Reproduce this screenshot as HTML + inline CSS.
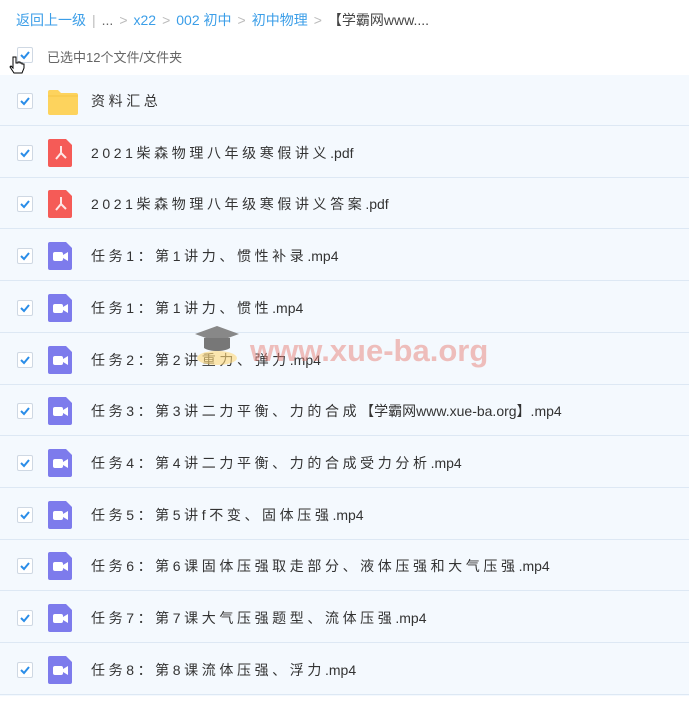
<!DOCTYPE html>
<html><head><meta charset="utf-8"><style>
body{margin:0;width:689px;height:703px;background:#fff;font-family:"Liberation Sans","Noto Sans CJK SC",sans-serif;position:relative;overflow:hidden}
.bc{position:absolute;left:16px;top:10px;font-size:14px;color:#3b9ee8;white-space:nowrap}
.bc .g{color:#bbb;margin:0 6px}
.bc .k{color:#444}
.sel{position:absolute;left:47px;top:47px;font-size:13px;color:#666}
.cb{position:absolute;width:14px;height:14px;border:1px solid #cfd8e3;border-radius:2px;background:#fff}
.cb svg{position:absolute;left:1px;top:1px}
.bg{position:absolute;left:0;top:75px;width:689px;height:621px;background:#f4f9fe}
.row{position:absolute;left:0;width:689px;height:50px;background:#f4f9fe;border-bottom:1px solid #dde8f4}
.row .cb{left:17px;top:18px}
.row .ic{position:absolute;left:48px;top:12px}
.row .t{position:absolute;left:91px;top:16px;font-size:14px;color:#333;letter-spacing:3.6px;white-space:nowrap}
.row .t i{font-style:normal;letter-spacing:0}
.wm{position:absolute;left:250px;top:333px;font-size:31px;font-weight:bold;color:rgba(232,130,120,.5);font-family:"Liberation Sans",sans-serif}
</style></head><body>
<div class="bc">返回上一级<span class="g">|</span><span style="color:#666">...</span><span class="g">&gt;</span>x22<span class="g">&gt;</span>002 初中<span class="g">&gt;</span>初中物理<span class="g">&gt;</span><span class="k">【学霸网www....</span></div>
<div class="cb" style="left:17px;top:47px"><svg width="12" height="12"><path d="M2 6l3 3 5-6" stroke="#2a8de8" stroke-width="2" fill="none"/></svg></div>
<svg style="position:absolute;left:8px;top:55px" width="18" height="22"><path d="M5 2v11l-2-2-1 1 4 6h8l2-5v-4h-2v-1h-2v-1h-2V8H8V2z" fill="#fff" stroke="#000" stroke-width="1"/></svg>
<div class="sel">已选中12个文件/文件夹</div>
<div class="bg"></div>
<div id="rows"></div>
<div class="wm">www.xue-ba.org</div>
<svg style="position:absolute;left:192px;top:320px" width="50" height="50"><path d="M3 14l22-8 22 8-22 8z" fill="#888"/><path d="M12 18v10c6 4 20 4 26 0V18" fill="#777"/><ellipse cx="25" cy="38" rx="20" ry="7" fill="#ffd87a" opacity=".6"/></svg>
<script>
var items=[["f","资料汇总"],["p","2021柴森物理八年级寒假讲义<i>.pdf</i>"],["p","2021柴森物理八年级寒假讲义答案<i>.pdf</i>"],["v","任务1：第1讲力、惯性补录<i>.mp4</i>"],["v","任务1：第1讲力、惯性<i>.mp4</i>"],["v","任务2：第2讲重力、弹力<i>.mp4</i>"],["v","任务3：第3讲二力平衡、力的合成<i>【学霸网www.xue-ba.org】.mp4</i>"],["v","任务4：第4讲二力平衡、力的合成受力分析<i>.mp4</i>"],["v","任务5：第5讲f不变、固体压强<i>.mp4</i>"],["v","任务6：第6课固体压强取走部分、液体压强和大气压强<i>.mp4</i>"],["v","任务7：第7课大气压强题型、流体压强<i>.mp4</i>"],["v","任务8：第8课流体压强、浮力<i>.mp4</i>"]];
var h="";
var ic={f:'<svg width="30" height="26" style="top:14px;position:relative"><path d="M0 3a2 2 0 012-2h8l3 3h15a2 2 0 012 2v18a2 2 0 01-2 2H2a2 2 0 01-2-2z" fill="#fdd35d"/><path d="M0 7h30" stroke="#f5c645"/></svg>',
p:'<svg width="26" height="28"><path d="M2 0h16l6 6v20a2 2 0 01-2 2H2a2 2 0 01-2-2V2a2 2 0 012-2z" fill="#f55b57"/><path d="M13 7v7l-5 6M13 14l5 5" stroke="#fff" stroke-width="2" fill="none" opacity=".85"/></svg>',
v:'<svg width="26" height="28"><path d="M2 0h16l6 6v20a2 2 0 01-2 2H2a2 2 0 01-2-2V2a2 2 0 012-2z" fill="#7d7bec"/><rect x="5" y="10" width="10" height="9" rx="2" fill="#fff"/><path d="M15 13l5-3v9l-5-3z" fill="#fff"/></svg>'};
items.forEach(function(it,i){var top=Math.round(75+i*51.7);h+='<div class="row" style="top:'+top+'px"><div class="cb"><svg width="12" height="12"><path d="M2 6l3 3 5-6" stroke="#2a8de8" stroke-width="2" fill="none"/></svg></div><div class="ic"'+(it[0]=="f"?' style="top:0"':'')+'>'+ic[it[0]]+'</div><div class="t">'+it[1]+'</div></div>';});
document.getElementById("rows").innerHTML=h;
</script>
</body></html>
